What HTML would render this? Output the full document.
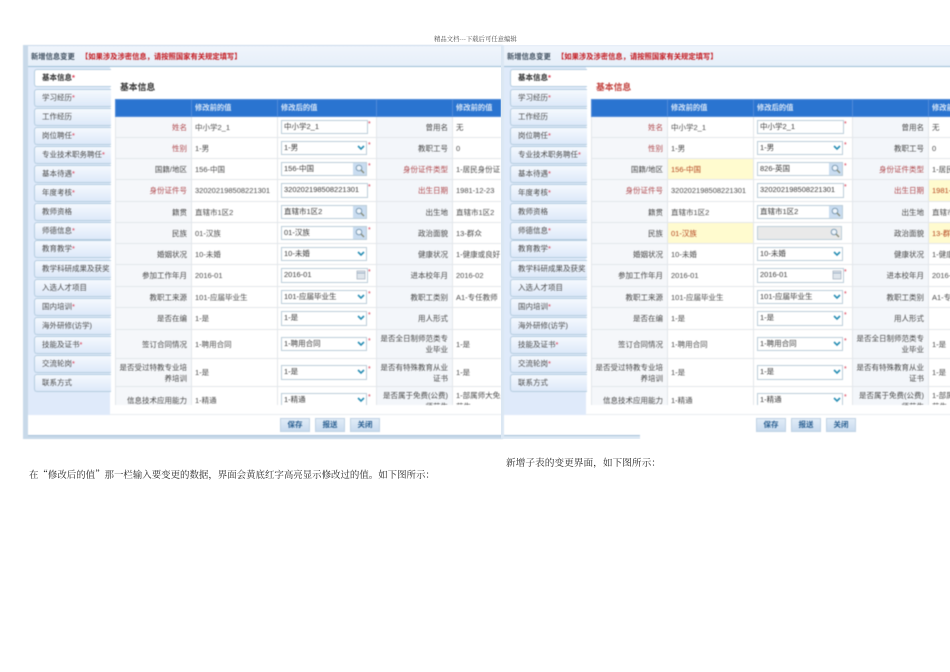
<!DOCTYPE html>
<html lang="zh">
<head>
<meta charset="utf-8">
<title>新增信息变更</title>
<style>
html,body{margin:0;padding:0;background:#fff}
body{position:relative;width:950px;height:672px;overflow:hidden;font-family:"Liberation Sans","Noto Sans CJK SC",sans-serif}
.doc{position:absolute;font-family:"Noto Serif CJK SC","Liberation Serif",serif;color:#2a2a2a;white-space:nowrap;filter:blur(.25px);text-spacing-trim:space-all}
.p{position:absolute;top:45px;width:480px;height:394px;background:#c8d9e9;filter:blur(.5px);overflow:hidden}
.p1{left:23px}
.p2{left:499px;clip-path:inset(0 0 0 2px);background:#dbe7f3}
.cov{position:absolute;left:141px;top:390px;width:340px;height:5px;background:#fff}
.in{position:absolute;left:5px;top:1px;width:475px;height:389px;background:#fff}
.hd{position:absolute;left:0;top:0;width:475px;height:20px;background:linear-gradient(#f0f5fc,#e6eff9);border-bottom:1.5px solid #9dbfd6;font-size:7.3px;line-height:21px;color:#3f4f5f;font-weight:bold;white-space:nowrap}
.hd span{position:absolute;left:3px}
.hd em{position:absolute;left:53px;font-style:normal;color:#c3171d;font-weight:bold;font-size:7.3px}
.sb{position:absolute;left:0;top:21px;width:82px;height:348px;background:#dfeafa}
.tb{position:absolute;left:6px;width:69px;height:16px;border:1px solid #b5cde0;border-right:0;border-radius:3px 0 0 3px;background:linear-gradient(#f5f9fe,#dde9f9);font-size:7.5px;line-height:16px;color:#4a4a4a;padding-left:7px;white-space:nowrap;overflow:hidden}
.tb.on{background:#fff;color:#2d2d2d;font-weight:bold}
.tb i{font-style:normal;color:#d9324a}
.ti{position:absolute;left:92px;top:34px;font-size:8.8px;font-weight:bold;color:#333;line-height:14px;white-space:nowrap}
.p2 .ti{color:#c2403c}
.wrap{position:absolute;left:87px;top:53px;width:386px;height:306px;overflow:hidden;border-bottom:1px solid #ccd6e2}
table{border-collapse:collapse;table-layout:fixed;width:386px;font-size:7.5px;color:#4c4c4c}
td,th{padding:0;border:1px solid #e3e7eb;overflow:visible}
th{background:#2a74d0;color:#d8e6f7;font-weight:bold;text-align:left;padding-left:3px;height:16px;border-color:#4f8ad8;font-size:7.3px}
td.l{background:#f3f6fa;text-align:right;padding-right:4px;line-height:11px;color:#484848}
td.l.a{background:#f5f7fa}
td.r{color:#b0494d}
td.v{padding-left:3px;line-height:11px;background:#fff;white-space:nowrap;overflow:hidden}
td.y{background:#fffbcf;color:#b5451f}
td.c{background:#fff}
.k{display:block;position:relative;width:87px;height:14.5px;margin-left:3px;border:1.5px solid #bcced9;box-sizing:border-box;line-height:11.5px;padding-left:2px;background:#fff;color:#3c3c3c;white-space:nowrap}
.k.s{width:86px}
.k.d{background:#e9e9e9;width:85px}
.k b{position:absolute;left:86px;top:-2px;color:#d9324a;font-weight:normal;font-size:7px}
.k u{position:absolute;right:0;top:0;bottom:0;width:13.5px;background:#c9dcf0;text-decoration:none}
.k.d u{background:#e9e9e9}
.k svg{position:absolute}
.k svg.ch{right:1px;top:3px}
.k svg.mg{left:2px;top:1px}
.k svg.ca{right:1px;top:1px}
.ft{position:absolute;left:82px;top:359px;width:393px;height:10px;background:#fff;border-bottom:1px solid #e8ecf0;box-sizing:border-box}
.bt{position:absolute;top:372px;width:30px;height:14px;background:linear-gradient(#e2ecf7,#c8dbef);border:1px solid #bfd2e4;box-sizing:border-box;font-size:7.5px;font-weight:bold;color:#2c6193;text-align:center;line-height:12px}
.ln{position:absolute;left:0;top:389px;width:475px;height:1px;background:#a8c2da}
</style>
</head>
<body>
<svg width="0" height="0" style="position:absolute">
<symbol id="c" viewBox="0 0 8 6"><path d="M1 1l3 3 3-3" fill="none" stroke="#2b8fb5" stroke-width="1.6"/></symbol>
<symbol id="m" viewBox="0 0 10 10"><circle cx="4" cy="4" r="2.8" fill="#eef5fb" stroke="#7f9db5" stroke-width="1"/><path d="M6 6l3 3" stroke="#8a8f7c" stroke-width="1.4"/></symbol>
<symbol id="d" viewBox="0 0 10 10"><rect x="1" y="1" width="8" height="8" fill="#dfe5ec" stroke="#aab6c4" stroke-width=".8"/><path d="M1 3h8" stroke="#9fb2c6"/></symbol>
</svg>

<div class="doc" style="left:434px;top:34px;font-size:6.35px;line-height:9px;color:#4d4d4d">精品文档---下载后可任意编辑</div>

<!-- left panel -->
<div class="p p1">
<div class="in">
<div class="hd"><span>新增信息变更</span><em>【如果涉及涉密信息，请按照国家有关规定填写】</em></div>
<div class="sb"></div>
<div class="tb on" style="top:23px">基本信息<i>*</i></div>
<div class="tb" style="top:43px">学习经历<i>*</i></div>
<div class="tb" style="top:62px">工作经历</div>
<div class="tb" style="top:81px">岗位聘任<i>*</i></div>
<div class="tb" style="top:100px">专业技术职务聘任<i>*</i></div>
<div class="tb" style="top:119px">基本待遇<i>*</i></div>
<div class="tb" style="top:138px">年度考核<i>*</i></div>
<div class="tb" style="top:157px">教师资格</div>
<div class="tb" style="top:176px">师德信息<i>*</i></div>
<div class="tb" style="top:194px">教育教学<i>*</i></div>
<div class="tb" style="top:214px">教学科研成果及获奖</div>
<div class="tb" style="top:233px">入选人才项目</div>
<div class="tb" style="top:252px">国内培训<i>*</i></div>
<div class="tb" style="top:271px">海外研修(访学)</div>
<div class="tb" style="top:290px">技能及证书<i>*</i></div>
<div class="tb" style="top:309px">交流轮岗<i>*</i></div>
<div class="tb" style="top:328px">联系方式</div>
<div class="ti">基本信息</div>
<div class="wrap">
<table>
<colgroup><col style="width:76px"><col style="width:86px"><col style="width:99px"><col style="width:76px"><col style="width:49px"></colgroup>
<tr><th></th><th>修改前的值</th><th>修改后的值</th><th></th><th>修改前的值</th></tr>
<tr style="height:21px"><td class="l a r">姓名</td><td class="v">中小学2_1</td><td class="c"><span class="k">中小学2_1<b>*</b></span></td><td class="l">曾用名</td><td class="v">无</td></tr>
<tr style="height:21px"><td class="l a r">性别</td><td class="v">1-男</td><td class="c"><span class="k s">1-男<svg class="ch" width="8" height="6"><use href="#c"/></svg><b>*</b></span></td><td class="l">教职工号</td><td class="v">0</td></tr>
<tr style="height:21px"><td class="l a">国籍/地区</td><td class="v">156-中国</td><td class="c"><span class="k s">156-中国<u><svg class="mg" width="10" height="10"><use href="#m"/></svg></u><b>*</b></span></td><td class="l r">身份证件类型</td><td class="v">1-居民身份证</td></tr>
<tr style="height:22px"><td class="l a r">身份证件号</td><td class="v">320202198508221301</td><td class="c"><span class="k">320202198508221301<b>*</b></span></td><td class="l r">出生日期</td><td class="v">1981-12-23</td></tr>
<tr style="height:21px"><td class="l a">籍贯</td><td class="v">直辖市1区2</td><td class="c"><span class="k s">直辖市1区2<u><svg class="mg" width="10" height="10"><use href="#m"/></svg></u></span></td><td class="l">出生地</td><td class="v">直辖市1区2</td></tr>
<tr style="height:21px"><td class="l a">民族</td><td class="v">01-汉族</td><td class="c"><span class="k s">01-汉族<u><svg class="mg" width="10" height="10"><use href="#m"/></svg></u><b>*</b></span></td><td class="l">政治面貌</td><td class="v">13-群众</td></tr>
<tr style="height:21px"><td class="l a">婚姻状况</td><td class="v">10-未婚</td><td class="c"><span class="k s">10-未婚<svg class="ch" width="8" height="6"><use href="#c"/></svg></span></td><td class="l">健康状况</td><td class="v">1-健康或良好</td></tr>
<tr style="height:22px"><td class="l a">参加工作年月</td><td class="v">2016-01</td><td class="c"><span class="k">2016-01<svg class="ca" width="10" height="10"><use href="#d"/></svg><b>*</b></span></td><td class="l">进本校年月</td><td class="v">2016-02</td></tr>
<tr style="height:21px"><td class="l a">教职工来源</td><td class="v">101-应届毕业生</td><td class="c"><span class="k s">101-应届毕业生<svg class="ch" width="8" height="6"><use href="#c"/></svg><b>*</b></span></td><td class="l">教职工类别</td><td class="v">A1-专任教师</td></tr>
<tr style="height:22px"><td class="l a">是否在编</td><td class="v">1-是</td><td class="c"><span class="k s">1-是<svg class="ch" width="8" height="6"><use href="#c"/></svg><b>*</b></span></td><td class="l">用人形式</td><td class="v"></td></tr>
<tr style="height:29px"><td class="l a">签订合同情况</td><td class="v">1-聘用合同</td><td class="c"><span class="k s">1-聘用合同<svg class="ch" width="8" height="6"><use href="#c"/></svg><b>*</b></span></td><td class="l">是否全日制师范类专业毕业</td><td class="v">1-是</td></tr>
<tr style="height:28px"><td class="l a">是否受过特教专业培养培训</td><td class="v">1-是</td><td class="c"><span class="k s">1-是<svg class="ch" width="8" height="6"><use href="#c"/></svg><b>*</b></span></td><td class="l">是否有特殊教育从业证书</td><td class="v">1-是</td></tr>
<tr style="height:28px"><td class="l a">信息技术应用能力</td><td class="v">1-精通</td><td class="c"><span class="k s">1-精通<svg class="ch" width="8" height="6"><use href="#c"/></svg><b>*</b></span></td><td class="l">是否属于免费(公费)师范生</td><td class="v">1-部属师大免费<br>范生</td></tr>
</table>
</div>
<div class="ft"></div>
<div class="bt" style="left:252px">保存</div>
<div class="bt" style="left:287px">报送</div>
<div class="bt" style="left:322px">关闭</div>
<div class="ln"></div>
</div>
</div>

<!-- right panel -->
<div class="p p2">
<div class="in">
<div class="hd"><span>新增信息变更</span><em>【如果涉及涉密信息，请按照国家有关规定填写】</em></div>
<div class="sb"></div>
<div class="tb on" style="top:23px">基本信息<i>*</i></div>
<div class="tb" style="top:43px">学习经历<i>*</i></div>
<div class="tb" style="top:62px">工作经历</div>
<div class="tb" style="top:81px">岗位聘任<i>*</i></div>
<div class="tb" style="top:100px">专业技术职务聘任<i>*</i></div>
<div class="tb" style="top:119px">基本待遇<i>*</i></div>
<div class="tb" style="top:138px">年度考核<i>*</i></div>
<div class="tb" style="top:157px">教师资格</div>
<div class="tb" style="top:176px">师德信息<i>*</i></div>
<div class="tb" style="top:194px">教育教学<i>*</i></div>
<div class="tb" style="top:214px">教学科研成果及获奖</div>
<div class="tb" style="top:233px">入选人才项目</div>
<div class="tb" style="top:252px">国内培训<i>*</i></div>
<div class="tb" style="top:271px">海外研修(访学)</div>
<div class="tb" style="top:290px">技能及证书<i>*</i></div>
<div class="tb" style="top:309px">交流轮岗<i>*</i></div>
<div class="tb" style="top:328px">联系方式</div>
<div class="ti">基本信息</div>
<div class="wrap">
<table>
<colgroup><col style="width:76px"><col style="width:86px"><col style="width:99px"><col style="width:76px"><col style="width:49px"></colgroup>
<tr><th></th><th>修改前的值</th><th>修改后的值</th><th></th><th>修改前的值</th></tr>
<tr style="height:21px"><td class="l a r">姓名</td><td class="v">中小学2_1</td><td class="c"><span class="k">中小学2_1<b>*</b></span></td><td class="l">曾用名</td><td class="v">无</td></tr>
<tr style="height:21px"><td class="l a r">性别</td><td class="v">1-男</td><td class="c"><span class="k s">1-男<svg class="ch" width="8" height="6"><use href="#c"/></svg><b>*</b></span></td><td class="l">教职工号</td><td class="v">0</td></tr>
<tr style="height:21px"><td class="l a">国籍/地区</td><td class="v y">156-中国</td><td class="c"><span class="k s">826-英国<u><svg class="mg" width="10" height="10"><use href="#m"/></svg></u><b>*</b></span></td><td class="l r">身份证件类型</td><td class="v">1-居民身份证</td></tr>
<tr style="height:22px"><td class="l a r">身份证件号</td><td class="v">320202198508221301</td><td class="c"><span class="k">320202198508221301<b>*</b></span></td><td class="l r">出生日期</td><td class="v y">1981-12-23</td></tr>
<tr style="height:21px"><td class="l a">籍贯</td><td class="v">直辖市1区2</td><td class="c"><span class="k s">直辖市1区2<u><svg class="mg" width="10" height="10"><use href="#m"/></svg></u></span></td><td class="l">出生地</td><td class="v">直辖市1区2</td></tr>
<tr style="height:21px"><td class="l a">民族</td><td class="v y">01-汉族</td><td class="c"><span class="k d"><u><svg class="mg" width="10" height="10"><use href="#m"/></svg></u></span></td><td class="l">政治面貌</td><td class="v y">13-群众</td></tr>
<tr style="height:21px"><td class="l a">婚姻状况</td><td class="v">10-未婚</td><td class="c"><span class="k s">10-未婚<svg class="ch" width="8" height="6"><use href="#c"/></svg></span></td><td class="l">健康状况</td><td class="v">1-健康或良好</td></tr>
<tr style="height:22px"><td class="l a">参加工作年月</td><td class="v">2016-01</td><td class="c"><span class="k">2016-01<svg class="ca" width="10" height="10"><use href="#d"/></svg><b>*</b></span></td><td class="l">进本校年月</td><td class="v">2016-02</td></tr>
<tr style="height:21px"><td class="l a">教职工来源</td><td class="v">101-应届毕业生</td><td class="c"><span class="k s">101-应届毕业生<svg class="ch" width="8" height="6"><use href="#c"/></svg><b>*</b></span></td><td class="l">教职工类别</td><td class="v">A1-专任教师</td></tr>
<tr style="height:22px"><td class="l a">是否在编</td><td class="v">1-是</td><td class="c"><span class="k s">1-是<svg class="ch" width="8" height="6"><use href="#c"/></svg><b>*</b></span></td><td class="l">用人形式</td><td class="v"></td></tr>
<tr style="height:29px"><td class="l a">签订合同情况</td><td class="v">1-聘用合同</td><td class="c"><span class="k s">1-聘用合同<svg class="ch" width="8" height="6"><use href="#c"/></svg><b>*</b></span></td><td class="l">是否全日制师范类专业毕业</td><td class="v">1-是</td></tr>
<tr style="height:28px"><td class="l a">是否受过特教专业培养培训</td><td class="v">1-是</td><td class="c"><span class="k s">1-是<svg class="ch" width="8" height="6"><use href="#c"/></svg><b>*</b></span></td><td class="l">是否有特殊教育从业证书</td><td class="v">1-是</td></tr>
<tr style="height:28px"><td class="l a">信息技术应用能力</td><td class="v">1-精通</td><td class="c"><span class="k s">1-精通<svg class="ch" width="8" height="6"><use href="#c"/></svg><b>*</b></span></td><td class="l">是否属于免费(公费)师范生</td><td class="v">1-部属师大免费<br>范生</td></tr>
</table>
</div>
<div class="ft"></div>
<div class="bt" style="left:252px">保存</div>
<div class="bt" style="left:287px">报送</div>
<div class="bt" style="left:322px">关闭</div>
<div class="ln"></div>
</div>
<div class="cov"></div>
</div>

<div class="doc" style="left:29px;top:468px;font-size:9.45px;line-height:13px">在“修改后的值”那一栏输入要变更的数据，界面会黄底红字高亮显示修改过的值。如下图所示：</div>
<div class="doc" style="left:506px;top:456px;font-size:9.7px;line-height:13px">新增子表的变更界面，如下图所示：</div>
</body>
</html>
